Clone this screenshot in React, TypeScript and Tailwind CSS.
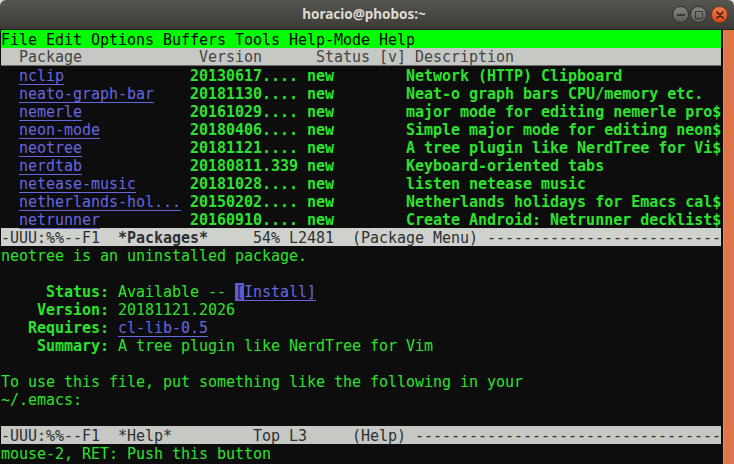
import React from "react";

// Ubuntu terminal running emacs list-packages, 80 cols × 24 rows, 9×18px cells

const GREEN = "text-[#2de22d]";
const LINK = "text-[#6767e0] underline decoration-1 underline-offset-[3px]";

const PACKAGES: [string, string, string][] = [
  ["nclip", "20130617....", "Network (HTTP) Clipboard"],
  ["neato-graph-bar", "20181130....", "Neat-o graph bars CPU/memory etc."],
  ["nemerle", "20161029....", "major mode for editing nemerle pro$"],
  ["neon-mode", "20180406....", "Simple major mode for editing neon$"],
  ["neotree", "20181121....", "A tree plugin like NerdTree for Vi$"],
  ["nerdtab", "20180811.339", "Keyboard-oriented tabs"],
  ["netease-music", "20181028....", "listen netease music"],
  ["netherlands-hol...", "20150202....", "Netherlands holidays for Emacs cal$"],
  ["netrunner", "20160910....", "Create Android: Netrunner decklist$"],
];

function Line({ className = "", children }: { className?: string; children?: React.ReactNode }) {
  return <div className={`h-[18px] pt-[2px] leading-[16px] whitespace-pre ${className}`}>{children}</div>;
}

function TitleButton({ kind }: { kind: "min" | "max" | "close" }) {
  const isClose = kind === "close";
  return (
    <div
      className={`flex h-[17px] w-[17px] items-center justify-center rounded-full border ${
        isClose
          ? "border-[#8f3414] bg-gradient-to-b from-[#f57a4a] to-[#dc4a16]"
          : "border-[#2f2e2a] bg-gradient-to-b from-[#86857f] to-[#5c5b56]"
      }`}
    >
      {kind === "min" && <div className="h-[2px] w-[8px] bg-[#3a3935]" />}
      {kind === "max" && <div className="h-[8px] w-[8px] border-[1.5px] border-[#3a3935]" />}
      {kind === "close" && (
        <svg width="8" height="8" viewBox="0 0 8 8">
          <path d="M1 1 L7 7 M7 1 L1 7" stroke="#3b1a0c" strokeWidth="1.6" strokeLinecap="round" />
        </svg>
      )}
    </div>
  );
}

export default function App() {
  return (
    <div className="flex h-[464px] w-[734px] flex-col overflow-hidden bg-[#d6d6d6]">
      {/* Title bar */}
      <div className="grid h-[30px] shrink-0 grid-cols-[1fr_auto_1fr] items-center rounded-t-[6px] border-b border-[#1e1e1c] bg-gradient-to-b from-[#56554f] to-[#3c3b37] pr-[6px]">
        <div />
        <div className="font-['Noto_Sans',sans-serif] text-[13.5px] font-bold text-[#dfdbd2]">horacio@phobos:~</div>
        <div className="flex items-center justify-end gap-[1px]">
          <TitleButton kind="min" />
          <TitleButton kind="max" />
          <div className="w-[2px]" />
          <TitleButton kind="close" />
        </div>
      </div>

      {/* Terminal body + overlay scrollbar */}
      <div className="flex min-h-0 flex-1">
        <div className="w-[723px] bg-[#0d0d0d] pl-[1px] font-['DejaVu_Sans_Mono',monospace] text-[15px] tracking-[-0.03px]">
          <div className="w-[720px]">
            <Line className="bg-[#00ff00] text-black">File Edit Options Buffers Tools Help-Mode Help</Line>
            <div className="h-[18px] whitespace-pre border-b border-[#6c6c6c] bg-[#c6c8c3] pt-[2px] leading-[15px] text-[#444]">
              {"  Package             Version      Status [v] Description"}
            </div>
            {PACKAGES.map(([name, ver, desc]) => (
              <Line key={name} className={GREEN}>
                {"  "}
                <span className={LINK}>{name}</span>
                {" ".repeat(19 - name.length)}
                <span className="font-bold">{ver}</span>
                {" "}
                <span className="font-bold">new</span>
                {"        "}
                <span className="font-bold">{desc}</span>
              </Line>
            ))}
            <Line className="bg-[#cfd2cc] text-[#2e3033]">
              {"-UUU:%%--F1  "}
              <span className="font-bold">*Packages*</span>
              {"     54% L2481  (Package Menu) " + "-".repeat(26)}
            </Line>
            <Line className={GREEN}>neotree is an uninstalled package.</Line>
            <Line />
            <Line className={GREEN}>
              <span className="font-bold">{"     Status:"}</span>
              {" Available -- "}
              <span className={LINK}>
                <span className="bg-[#5c5cd8] text-[#22226a]">[</span>
                Install]
              </span>
            </Line>
            <Line className={GREEN}>
              <span className="font-bold">{"    Version:"}</span>
              {" 20181121.2026"}
            </Line>
            <Line className={GREEN}>
              <span className="font-bold">{"   Requires:"}</span>{" "}
              <span className={LINK}>cl-lib-0.5</span>
            </Line>
            <Line className={GREEN}>
              <span className="font-bold">{"    Summary:"}</span>
              {" A tree plugin like NerdTree for Vim"}
            </Line>
            <Line />
            <Line className={GREEN}>To use this file, put something like the following in your</Line>
            <Line className={GREEN}>~/.emacs:</Line>
            <Line />
            <Line className="bg-[#c6c8c3] text-[#2e3033]">
              {"-UUU:%%--F1  *Help*         Top L3     (Help) " + "-".repeat(34)}
            </Line>
            <Line className={GREEN}>mouse-2, RET: Push this button</Line>
          </div>
        </div>
        <div className="w-[1px] bg-[#a9a29c]" />
        <div className="flex-1 bg-[#de7649]" />
      </div>
    </div>
  );
}
